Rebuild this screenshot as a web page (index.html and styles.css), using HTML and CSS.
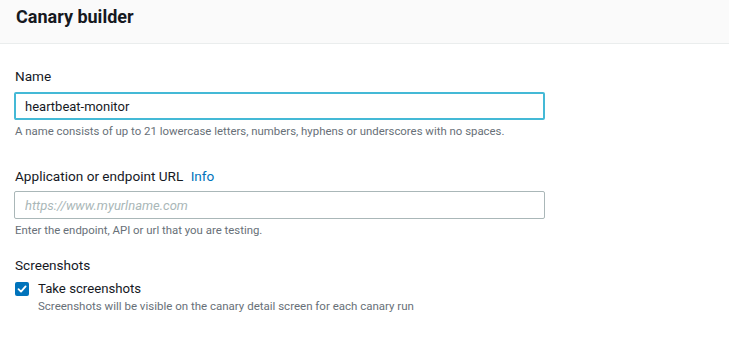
FILE: index.html
```html
<!DOCTYPE html>
<html lang="en">
<head>
    <meta charset="UTF-8">
    <title>Canary builder</title>
    <link rel="stylesheet" href="styles.css">
</head>
<body>
    <div class="panel-header">
        <h2>Canary builder</h2>
    </div>
    <div class="panel-body">
        <div class="field field-name">
            <label class="field-label" for="name">Name</label>
            <input type="text" id="name" class="text-input focused" value="heartbeat-monitor">
            <div class="field-hint">A name consists of up to 21 lowercase letters, numbers, hyphens or underscores with no spaces.</div>
        </div>
        <div class="field field-url">
            <label class="field-label" for="url">Application or endpoint URL <a class="info-link" href="#">Info</a></label>
            <input type="text" id="url" class="text-input" placeholder="https://www.myurlname.com">
            <div class="field-hint">Enter the endpoint, API or url that you are testing.</div>
        </div>
        <div class="field">
            <div class="field-label group-label">Screenshots</div>
            <div class="check-row">
                <span class="checkbox">
                    <svg width="10" height="10" viewBox="0 0 10 10"><path d="M1.5 5.2 L4 7.6 L8.6 2.4" fill="none" stroke="#fff" stroke-width="1.8" stroke-linecap="round" stroke-linejoin="round"/></svg>
                </span>
                <div>
                    <div class="check-label">Take screenshots</div>
                    <div class="check-desc">Screenshots will be visible on the canary detail screen for each canary run</div>
                </div>
            </div>
        </div>
    </div>
</body>
</html>
```

FILE: styles.css
```css
body {
    margin: 0;
    font-family: Roboto, "Noto Sans", sans-serif;
    color: #16191f;
    background-color: #fff;
}
.panel-header {
    height: 44px;
    box-sizing: border-box;
    padding: 6px 16px 0;
    background-color: #fafafa;
    border-bottom: 1px solid #eaeded;
}
.panel-header h2 {
    margin: 0;
    font-size: 18px;
    font-weight: 700;
    line-height: 22px;
    color: #16191f;
}
.panel-body {
    padding: 22px 15px 0;
}
.field-name {
    margin-bottom: 27px;
}
.field-url {
    margin-bottom: 17px;
}
.field-label {
    display: block;
    font-size: 13.6px;
    line-height: 20px;
    color: #16191f;
    margin-bottom: 6px;
}
.field-url .field-label {
    margin-bottom: 5px;
}
.group-label {
    margin-bottom: 4px;
}
.info-link {
    margin-left: 4px;
    color: #0073bb;
    text-decoration: none;
}
.text-input {
    display: block;
    width: 531px;
    height: 28px;
    box-sizing: border-box;
    margin-left: -1px;
    padding: 0 10px;
    border: 1px solid #aab7b8;
    border-radius: 2px;
    font-family: Roboto, "Noto Sans", sans-serif;
    font-size: 13px;
    color: #16191f;
    outline: none;
}
.text-input.focused {
    border: 2px solid #44b9d6;
    padding: 0 9px;
}
.text-input::placeholder {
    color: #aab7b8;
    font-style: italic;
}
.field-hint {
    margin-top: 3px;
    font-size: 11.4px;
    line-height: 16px;
    color: #687078;
}
.check-row {
    display: flex;
    align-items: flex-start;
    gap: 9px;
}
.checkbox {
    width: 14px;
    height: 14px;
    margin-top: 3px;
    border-radius: 2px;
    background-color: #0073bb;
    display: flex;
    align-items: center;
    justify-content: center;
}
.check-label {
    font-size: 13.2px;
    line-height: 19px;
}
.check-desc {
    font-size: 11.5px;
    line-height: 16px;
    color: #687078;
}
```
